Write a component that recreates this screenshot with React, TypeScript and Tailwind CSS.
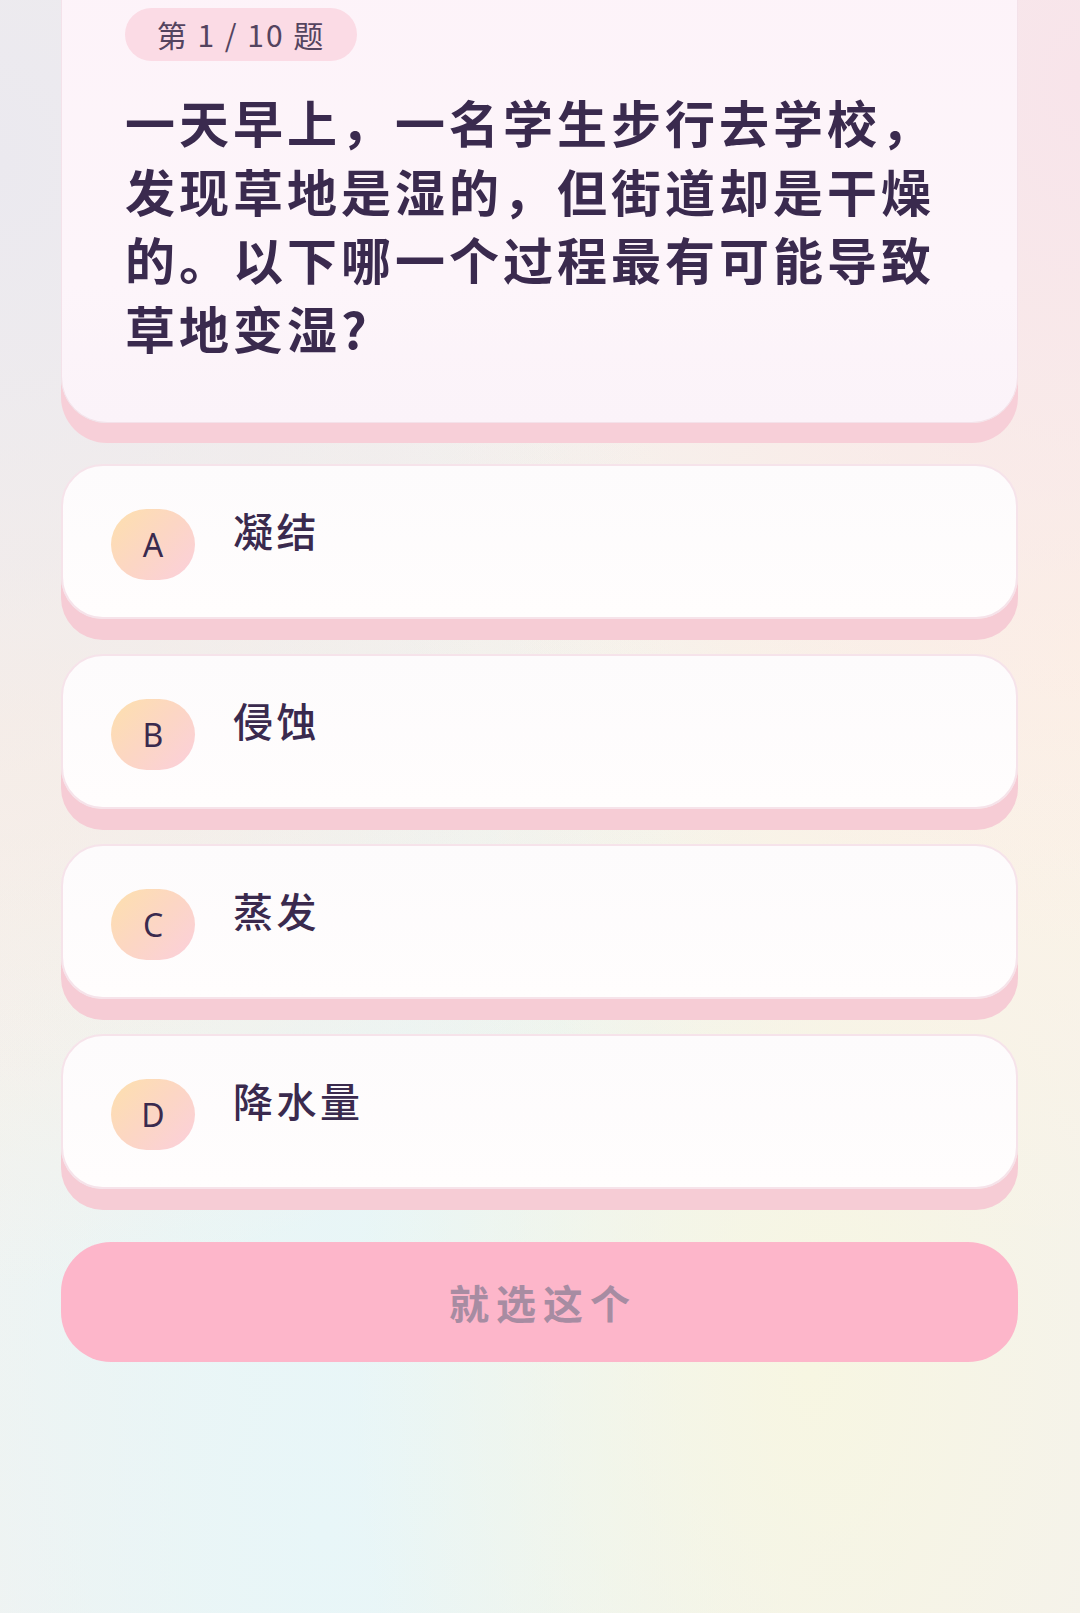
import React from "react";

const options = [
  { key: "A", text: "凝结" },
  { key: "B", text: "侵蚀" },
  { key: "C", text: "蒸发" },
  { key: "D", text: "降水量" },
];

export default function App() {
  return (
    <div className="relative min-h-[1613px] w-[1080px] overflow-hidden bg-[#f4f1ee] font-['Noto_Sans_CJK_SC','Noto_Sans',sans-serif]">
      <div className="pointer-events-none absolute inset-0 bg-[radial-gradient(ellipse_at_0%_10%,#ebe9ef_0%,transparent_45%),radial-gradient(ellipse_at_100%_5%,#f8e4ea_0%,transparent_40%),radial-gradient(ellipse_at_0%_45%,#fbefe4_0%,transparent_45%),radial-gradient(ellipse_at_100%_40%,#fdf3e4_0%,transparent_45%),radial-gradient(ellipse_at_75%_85%,#f7f6e2_0%,transparent_40%),radial-gradient(ellipse_at_30%_95%,#e8f6f8_0%,transparent_55%),radial-gradient(ellipse_at_35%_78%,#e9f5f2_0%,transparent_45%)]" />
      <div className="relative flex flex-col pl-[61px] pr-[62px]">
        {/* Question card */}
        <div className="-mt-[50px] flex flex-col rounded-[46px] border border-[#f4e2ea] bg-[linear-gradient(180deg,#fdf3f9_0%,#fdf5fa_70%,#fbf3f9_100%)] pl-[63px] pr-[70px] pt-[57px] pb-[61px] shadow-[0_20px_0_#f7cfd8]">
          <div className="flex h-[53px] w-[232px] items-center justify-center rounded-full bg-[#fbdbe5] text-[30px] tracking-[2px] text-[#54445f]">
            第 1 / 10 题
          </div>
          <div className="mt-[26px] text-[50px] font-bold leading-[68.5px] tracking-[4px] text-[#3a2a4e]">
            一天早上，一名学生步行去学校，发现草地是湿的，但街道却是干燥的。以下哪一个过程最有可能导致草地变湿?
          </div>
        </div>

        {/* Options */}
        <div className="mt-[41px] flex flex-col gap-[35px]">
          {options.map((o) => (
            <div
              key={o.key}
              className="flex h-[155px] items-start rounded-[42px] border-2 border-[#f6e3ea] bg-[linear-gradient(180deg,#fdfbfc_0%,#fffdfd_100%)] pl-[48px] pt-[43px] shadow-[0_21px_0_#f6ccd5]"
            >
              <div className="flex h-[71px] w-[84px] shrink-0 items-center justify-center rounded-full bg-[linear-gradient(135deg,#fde0ad_0%,#fcd6c4_50%,#fbcfdc_100%)] font-['Noto_Sans',sans-serif] text-[32px] text-[#3a2a4e]">
                {o.key}
              </div>
              <div className="ml-[38px] -mt-[4px] text-[40px] font-medium leading-[50px] tracking-[3.5px] text-[#3a2a4e]">
                {o.text}
              </div>
            </div>
          ))}
        </div>

        {/* Submit button */}
        <div className="mt-[53px] flex h-[120px] items-center justify-center rounded-[50px] bg-[#fdb6ca] pl-[7px] text-[40px] font-bold tracking-[7px] text-[#a78ca2]">
          就选这个
        </div>
      </div>
    </div>
  );
}
